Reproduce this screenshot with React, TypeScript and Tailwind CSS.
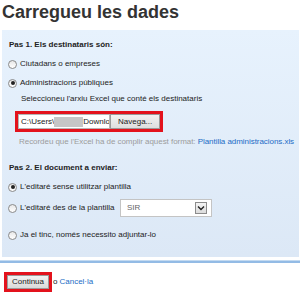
import React from "react";

function Radio({ checked }: { checked?: boolean }) {
  return (
    <span className="flex h-[9px] w-[9px] shrink-0 items-center justify-center rounded-full border border-[#8a8a8a] bg-gradient-to-b from-[#e8e8e8] to-white">
      {checked && <span className="h-[4px] w-[4px] rounded-full bg-[#222]" />}
    </span>
  );
}

export default function App() {
  return (
    <div
      className="flex h-[300px] w-[300px] flex-col overflow-hidden bg-white text-[8px] leading-[12px] text-[#222]"
      style={{ fontFamily: '"Liberation Sans", Arial, sans-serif' }}
    >
      <div className="mt-[1px] h-[22px] pl-[2px] text-[18px] font-bold leading-[22px] text-[#333]">
        Carregueu les dades
      </div>
      <div className="ml-[2px] mr-[1px] mt-[7px] flex flex-col bg-gradient-to-b from-[#e7f2fd] to-[#dce8f6] pb-[16px] pt-[9px]">
        <div className="h-[12px] pl-[7px] font-bold">Pas 1. Els destinataris són:</div>
        <div className="mt-[7px] flex h-[12px] items-center gap-[3px] pl-[6px]">
          <Radio />
          <span>Ciutadans o empreses</span>
        </div>
        <div className="mt-[7px] flex h-[12px] items-center gap-[3px] pl-[6px]">
          <Radio checked />
          <span>Administracions públiques</span>
        </div>
        <div className="mt-[4px] h-[12px] pl-[19px]">
          Seleccioneu l'arxiu Excel que conté els destinataris
        </div>
        <div className="ml-[13px] mt-[6px] flex h-[21px] w-[148px] border-[3px] border-[#e3121c] bg-white">
          <div className="flex h-full w-[92px] items-center overflow-hidden whitespace-nowrap border border-[#b5b5b5] pl-[2px]">
            <span>C:\Users\</span>
            <span className="h-[10px] w-[29px] shrink-0 bg-[#c6c6c6]" />
            <span>Downloa</span>
          </div>
          <div className="flex h-full w-[50px] items-center border border-[#9a9a9a] bg-gradient-to-b from-[#f2f2f2] to-[#dedede] pl-[7px]">
            Navega...
          </div>
        </div>
        <div className="mt-[4px] h-[12px] whitespace-nowrap pl-[17px] tracking-[-0.05px] text-[#9c9c9c]">
          Recordeu que l'Excel ha de complir aquest format:{" "}
          <span className="text-[#1c6cc6]">Plantilla administracions.xls</span>
        </div>
        <div className="mt-[14px] h-[12px] pl-[7px] font-bold">Pas 2. El document a enviar:</div>
        <div className="mt-[7px] flex h-[12px] items-center gap-[3px] pl-[6px]">
          <Radio checked />
          <span>L'editaré sense utilitzar plantilla</span>
        </div>
        <div className="mt-[6px] flex h-[18px] items-center pl-[6px]">
          <div className="flex w-[112px] items-center gap-[3px]">
            <Radio />
            <span>L'editaré des de la plantilla</span>
          </div>
          <div className="flex h-[18px] w-[92px] items-center justify-between border border-[#c4c4c4] bg-white pl-[6px] pr-[4px] text-[#666]">
            <span>SIR</span>
            <span className="flex h-[12px] w-[12px] items-center justify-center border border-[#8c8c8c] bg-gradient-to-b from-[#f4f4f4] to-[#dcdcdc]">
              <svg width="8" height="6" viewBox="0 0 8 6">
                <path d="M1 1.5 L4 4.5 L7 1.5" fill="none" stroke="#222" strokeWidth="1.4" />
              </svg>
            </span>
          </div>
        </div>
        <div className="mt-[12px] flex h-[12px] items-center gap-[3px] pl-[6px]">
          <Radio />
          <span>Ja el tinc, només necessito adjuntar-lo</span>
        </div>
      </div>
      <div className="mt-[3px] h-[3px] border-t border-[#c3daf1] bg-[#93bbe5]" />
      <div className="mt-[9px] flex items-center pl-[4px]">
        <div className="flex h-[20px] w-[48px] border-[3px] border-[#e3121c]">
          <div className="flex h-full w-full items-center justify-center border border-[#9a9a9a] bg-gradient-to-b from-[#f2f2f2] to-[#dadada]">
            Continua
          </div>
        </div>
        <span className="ml-[1px]">o</span>
        <span className="ml-[2px] text-[#1c6cc6]">Cancel·la</span>
      </div>
    </div>
  );
}
